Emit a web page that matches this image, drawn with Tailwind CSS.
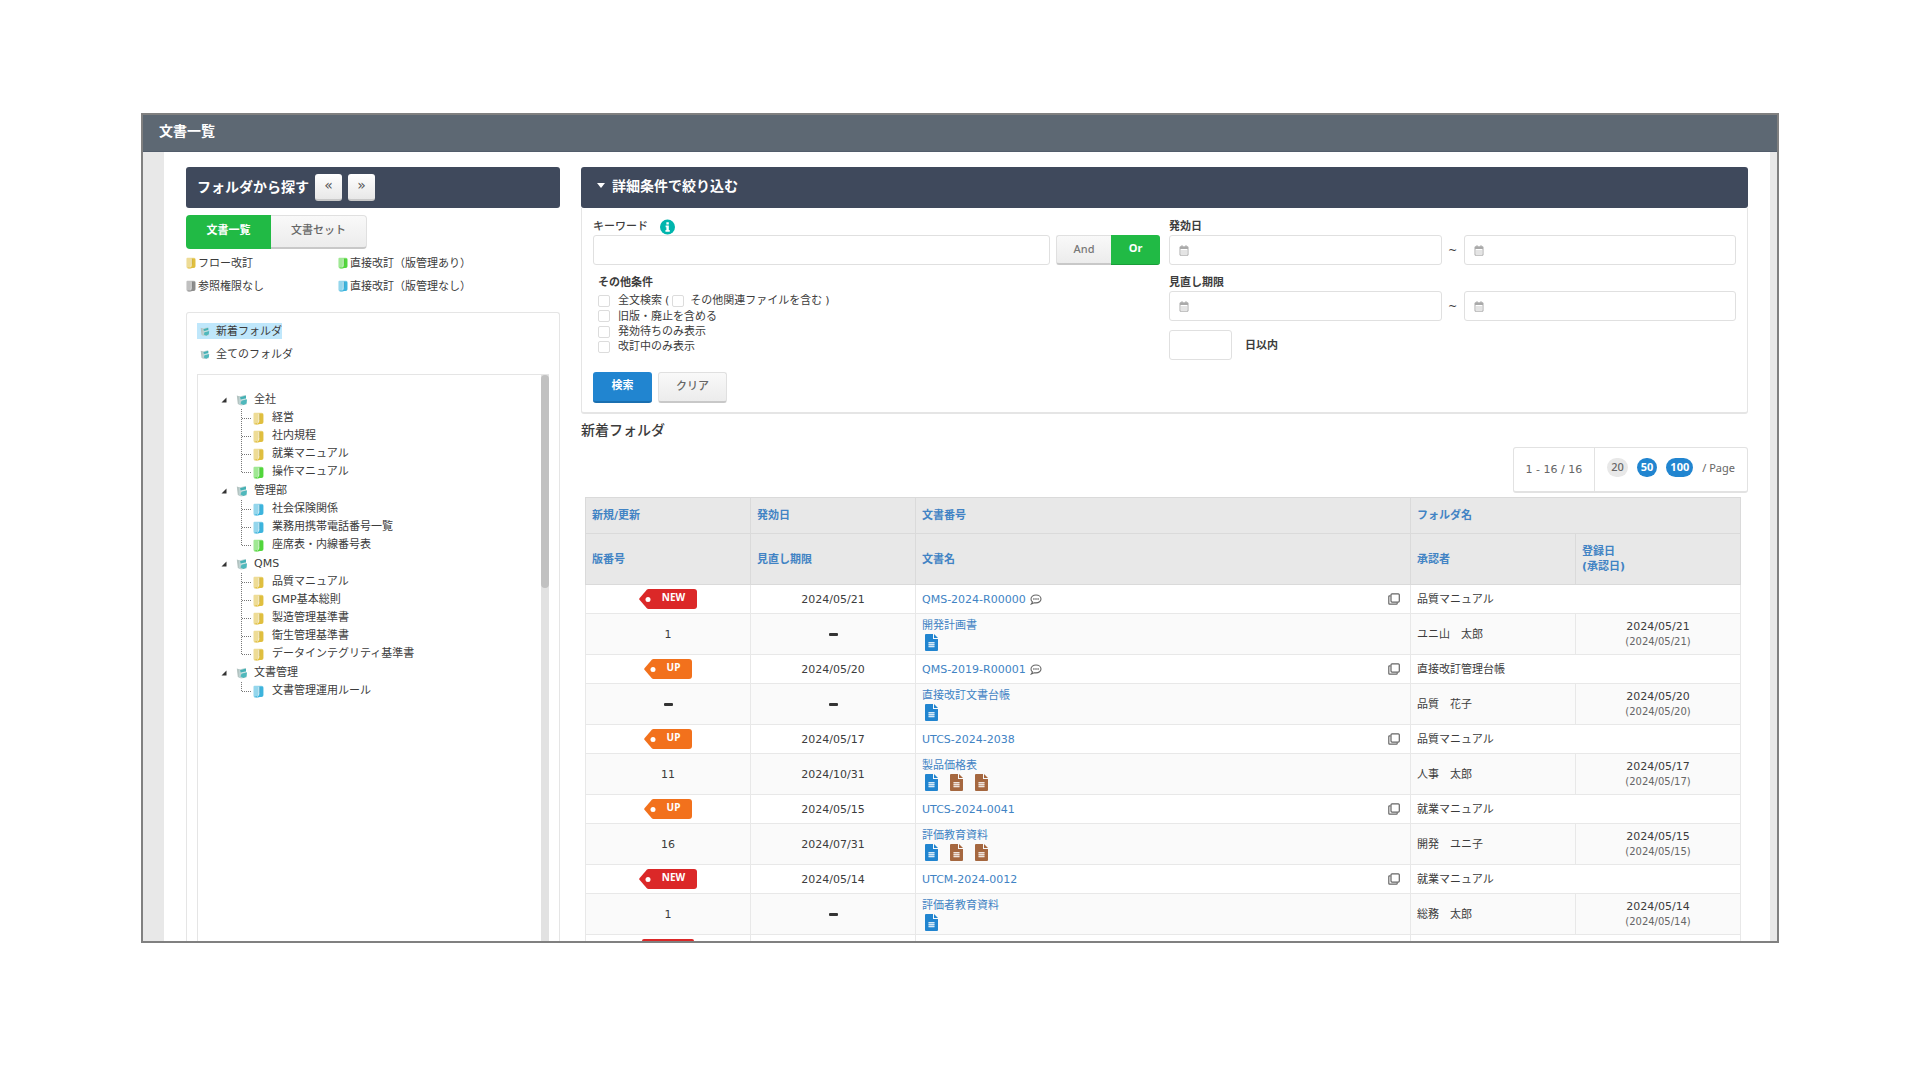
<!DOCTYPE html>
<html lang="ja">
<head>
    <meta charset="UTF-8">
    <meta name="viewport" content="width=device-width, initial-scale=1.0">
    <title>文書一覧</title>
    <script src="https://cdn.jsdelivr.net/npm/@tailwindcss/browser@4"></script>
</head>
<body class="bg-white">
    <!-- icons -->
    <svg class="hidden">
        <symbol id="folder" viewBox="0 0 11 13">
            <path d="M1.500.8h7q2 0 2 1.500v8q0 1.200-1.500 1.400L3 12.600q-2.500 0-2.500-1.600V1.800q0-1 1-1z" fill="currentColor" opacity=".55"/>
            <path d="M6.500 1.500h2.500q1.200 0 1.200 1.200v7.500q0 1-1.200 1.200L4.500 12.200q2-1 2-4z" fill="currentColor"/>
            <path d="M1 12 4.500 10.800 10 10.200q0 1.200-1.300 1.500L3.500 12.600z" fill="currentColor"/>
            <path d="M5.800 2v6q0 2.500-1.800 4" fill="none" stroke="#fff" stroke-opacity=".6" stroke-width=".8"/>
            <path d="M6.600 1.800v6.400" stroke="#000" stroke-opacity=".15" stroke-width=".7"/>
        </symbol>
        <symbol id="cabinet" viewBox="0 0 12 12">
            <path d="M.8 1.500 4 2.500V11L1.800 10z" fill="#b4c4c2"/>
            <path d="M3 2.500 9.500 1l1 9.500L5 11.500l-2-1z" fill="#bfd3d2"/>
            <path d="M4 3.200 10 1.500v3.100L5 6z" fill="#45b1b5"/>
            <path d="M5.500 6.800 11 5.300 10.600 9.400 7.500 11 4.500 9.600z" fill="#4fb8bc"/>
            <path d="M4.800 6 9.500 4.900" stroke="#e4f4f4" stroke-width=".7"/>
        </symbol>
        <symbol id="tee" viewBox="0 0 10 18">
            <path d="M.5 0V18M1 9.500H10" fill="none" stroke="#777" stroke-dasharray="1 1"/>
        </symbol>
        <symbol id="elbow" viewBox="0 0 10 18">
            <path d="M.5 0V10M1 9.500H10" fill="none" stroke="#777" stroke-dasharray="1 1"/>
        </symbol>
        <symbol id="open" viewBox="0 0 6 6"><path d="M5.500.5v5H.5z" fill="#333"/></symbol>
        <symbol id="calendar" viewBox="0 0 10 11">
            <path d="M1 1.800h8v8.400H1z" fill="none" stroke="#aaa" stroke-width="1"/>
            <path d="M1 2h8v2H1z" fill="#aaa"/>
            <path d="M3 .3v2M7 .3v2" stroke="#aaa" stroke-width="1.200"/>
            <path d="M2 6h6M2 8h6" stroke="#bbb" stroke-width=".8"/>
        </symbol>
        <symbol id="file" viewBox="0 0 13 17">
            <path d="M1 0h7v5h5v11q0 1-1 1H1q-1 0-1-1V1q0-1 1-1z" fill="currentColor"/>
            <path d="M9 0 13 4H9z" fill="currentColor"/>
            <path d="M3.500 8h6v1.200h-6zM3.500 10h6v1.200h-6zM3.500 12h6v1.200h-6z" fill="#fff" opacity=".75"/>
            <path d="M3.500 8h6v5.200h-6z" fill="#fff" opacity=".3"/>
        </symbol>
        <symbol id="copy" viewBox="0 0 12 12">
            <rect x="3" y=".8" width="8.300" height="8.300" rx="1" fill="none" stroke="#666" stroke-width="1.200"/>
            <path d="M2.500 2.800H1.600q-.8 0-.8.800v6.800q0 .8.800.8h6.800q.8 0 .8-.8v-.9" fill="none" stroke="#666" stroke-width="1.200"/>
        </symbol>
        <symbol id="comment" viewBox="0 0 12 11">
            <path d="M6 1C3.200 1 1 2.600 1 4.900c0 1.300.6 2.300 1.500 3L1.300 10l2.900-1.300c.6.100 1.200.2 1.800.2 2.800 0 5-1.700 5-4S8.800 1 6 1z" fill="none" stroke="#666" stroke-width="1.100"/>
            <path d="M3.300 5h1.200M5.400 5h1.200M7.500 5h1.200" stroke="#555" stroke-width="1.300"/>
        </symbol>
        <symbol id="minus" viewBox="0 0 9 3"><rect width="9" height="3" rx="1" fill="#333"/></symbol>
        <symbol id="tip" viewBox="0 0 12 20">
            <path d="M12 0H9.500Q8.500 0 7.800.8L.5 9.200q-.6.800 0 1.600l7.300 8.400q.7.800 1.700.8H12z" fill="currentColor"/>
            <circle cx="9" cy="10.500" r="2.500" fill="#fff"/>
        </symbol>
    </svg>

    <div class="h-screen overflow-hidden pt-[113px] pb-[137px] px-[141px] text-[11px] leading-[15px] text-[#3c3c3c] font-['DejaVu_Sans','Noto_Sans_CJK_JP',sans-serif]">
        <div class="h-full flex flex-col overflow-hidden border-2 border-[#808080]">
            <header class="h-[37px] shrink-0 flex items-center px-4 pb-1 bg-[#5d6873] border-b border-[#525d6b]">
                <h1 class="text-[14px] leading-5 font-bold text-white">文書一覧</h1>
            </header>
            <div class="flex-1 min-h-0 flex pl-[21px] pr-[7px] bg-[#e8e8e8]">
                <div class="flex-1 min-w-0 flex gap-[21px] pl-[22px] pr-[22px] pt-[15px] bg-white">

                    <!-- folder pane -->
                    <aside class="w-[374px] shrink-0 flex flex-col">
                        <div class="h-[41px] shrink-0 flex items-center gap-[6px] px-[11px] rounded-[3px] bg-[#3f495c]">
                            <h2 class="pb-[2px] text-[14px] leading-5 font-bold text-white">フォルダから探す</h2>
                            <button class="w-[27px] h-[27px] pb-[3px] rounded-[3px] border-b-2 border-[#c8c8c8] bg-linear-to-b from-white to-[#e8e8e8] text-[14px] leading-5 text-[#555]">«</button>
                            <button class="w-[27px] h-[27px] pb-[3px] rounded-[3px] border-b-2 border-[#c8c8c8] bg-linear-to-b from-white to-[#e8e8e8] text-[14px] leading-5 text-[#555]">»</button>
                        </div>
                        <div class="flex shrink-0 mt-[7px] h-[34px]">
                            <button class="w-[85px] pb-1 rounded-l-[4px] bg-[#21ba45] text-white font-bold">文書一覧</button>
                            <button class="w-[96px] pb-[2px] rounded-r-[4px] border border-l-0 border-b-2 border-[#e0e0e0] border-b-[#c8c8c8] bg-linear-to-b from-[#f9f9f9] to-[#ececec] text-[#666] font-medium">文書セット</button>
                        </div>
                        <ul class="grid grid-cols-[152px_1fr] gap-y-2 mt-[7px]">
                            <li class="flex items-center gap-[2px]"><svg class="w-[10px] h-3 mb-[2px] text-[#e0bf3f]"><use href="#folder"/></svg>フロー改訂</li>
                            <li class="flex items-center gap-[2px]"><svg class="w-[10px] h-3 mb-[2px] text-[#52d63c]"><use href="#folder"/></svg>直接改訂（版管理あり）</li>
                            <li class="flex items-center gap-[2px]"><svg class="w-[10px] h-3 mb-[2px] text-[#8c8c8c]"><use href="#folder"/></svg>参照権限なし</li>
                            <li class="flex items-center gap-[2px]"><svg class="w-[10px] h-3 mb-[2px] text-[#3db4dd]"><use href="#folder"/></svg>直接改訂（版管理なし）</li>
                        </ul>
                        <div class="flex-1 min-h-0 flex flex-col mt-[18px] px-[10px] pt-[10px] border border-b-0 border-[#e5e5e5] rounded-t-[3px]">
                            <a href="#" class="self-start flex items-center h-4 pl-[3px] gap-[6px] bg-[#bfe7fb]"><svg class="w-[10px] h-[11px]"><use href="#cabinet"/></svg>新着フォルダ</a>
                            <a href="#" class="self-start flex items-center h-4 mt-[7px] pl-[3px] gap-[6px]"><svg class="w-[10px] h-[11px]"><use href="#cabinet"/></svg>全てのフォルダ</a>
                            <div class="flex-1 min-h-0 flex mt-3 border border-b-0 border-r-0 border-[#e5e5e5]">
                                <ul class="flex-1 min-w-0 overflow-hidden pt-[15px] pl-[23px] leading-[18px]">
                                    <li>
                                        <div class="flex items-center h-[19px]"><svg class="w-[6px] h-[6px] mr-[9px]"><use href="#open"/></svg><svg class="w-3 h-3 mr-[6px]"><use href="#cabinet"/></svg>全社</div>
                                        <ul class="pl-5">
                                            <li class="flex items-center"><svg class="w-[10px] h-[18px] mr-[2px]"><use href="#tee"/></svg><svg class="w-[11px] h-[13px] mr-2 text-[#e0bf3f]"><use href="#folder"/></svg>経営</li>
                                            <li class="flex items-center"><svg class="w-[10px] h-[18px] mr-[2px]"><use href="#tee"/></svg><svg class="w-[11px] h-[13px] mr-2 text-[#e0bf3f]"><use href="#folder"/></svg>社内規程</li>
                                            <li class="flex items-center"><svg class="w-[10px] h-[18px] mr-[2px]"><use href="#tee"/></svg><svg class="w-[11px] h-[13px] mr-2 text-[#e0bf3f]"><use href="#folder"/></svg>就業マニュアル</li>
                                            <li class="flex items-center"><svg class="w-[10px] h-[18px] mr-[2px]"><use href="#elbow"/></svg><svg class="w-[11px] h-[13px] mr-2 text-[#52d63c]"><use href="#folder"/></svg>操作マニュアル</li>
                                        </ul>
                                    </li>
                                    <li>
                                        <div class="flex items-center h-[19px]"><svg class="w-[6px] h-[6px] mr-[9px]"><use href="#open"/></svg><svg class="w-3 h-3 mr-[6px]"><use href="#cabinet"/></svg>管理部</div>
                                        <ul class="pl-5">
                                            <li class="flex items-center"><svg class="w-[10px] h-[18px] mr-[2px]"><use href="#tee"/></svg><svg class="w-[11px] h-[13px] mr-2 text-[#3db4dd]"><use href="#folder"/></svg>社会保険関係</li>
                                            <li class="flex items-center"><svg class="w-[10px] h-[18px] mr-[2px]"><use href="#tee"/></svg><svg class="w-[11px] h-[13px] mr-2 text-[#3db4dd]"><use href="#folder"/></svg>業務用携帯電話番号一覧</li>
                                            <li class="flex items-center"><svg class="w-[10px] h-[18px] mr-[2px]"><use href="#elbow"/></svg><svg class="w-[11px] h-[13px] mr-2 text-[#52d63c]"><use href="#folder"/></svg>座席表・内線番号表</li>
                                        </ul>
                                    </li>
                                    <li>
                                        <div class="flex items-center h-[19px]"><svg class="w-[6px] h-[6px] mr-[9px]"><use href="#open"/></svg><svg class="w-3 h-3 mr-[6px]"><use href="#cabinet"/></svg>QMS</div>
                                        <ul class="pl-5">
                                            <li class="flex items-center"><svg class="w-[10px] h-[18px] mr-[2px]"><use href="#tee"/></svg><svg class="w-[11px] h-[13px] mr-2 text-[#e0bf3f]"><use href="#folder"/></svg>品質マニュアル</li>
                                            <li class="flex items-center"><svg class="w-[10px] h-[18px] mr-[2px]"><use href="#tee"/></svg><svg class="w-[11px] h-[13px] mr-2 text-[#e0bf3f]"><use href="#folder"/></svg>GMP基本総則</li>
                                            <li class="flex items-center"><svg class="w-[10px] h-[18px] mr-[2px]"><use href="#tee"/></svg><svg class="w-[11px] h-[13px] mr-2 text-[#e0bf3f]"><use href="#folder"/></svg>製造管理基準書</li>
                                            <li class="flex items-center"><svg class="w-[10px] h-[18px] mr-[2px]"><use href="#tee"/></svg><svg class="w-[11px] h-[13px] mr-2 text-[#e0bf3f]"><use href="#folder"/></svg>衛生管理基準書</li>
                                            <li class="flex items-center"><svg class="w-[10px] h-[18px] mr-[2px]"><use href="#elbow"/></svg><svg class="w-[11px] h-[13px] mr-2 text-[#e0bf3f]"><use href="#folder"/></svg>データインテグリティ基準書</li>
                                        </ul>
                                    </li>
                                    <li>
                                        <div class="flex items-center h-[19px]"><svg class="w-[6px] h-[6px] mr-[9px]"><use href="#open"/></svg><svg class="w-3 h-3 mr-[6px]"><use href="#cabinet"/></svg>文書管理</div>
                                        <ul class="pl-5">
                                            <li class="flex items-center"><svg class="w-[10px] h-[18px] mr-[2px]"><use href="#elbow"/></svg><svg class="w-[11px] h-[13px] mr-2 text-[#3db4dd]"><use href="#folder"/></svg>文書管理運用ルール</li>
                                        </ul>
                                    </li>
                                </ul>
                                <div class="w-2 bg-[#e2e2e2]"><div class="h-[213px] rounded-[4px] bg-[#c1c1c1]"></div></div>
                            </div>
                        </div>
                    </aside>

                    <main class="flex-1 min-w-0">
                        <!-- search conditions -->
                        <h2 class="h-[41px] flex items-center gap-[7px] px-4 pb-1 rounded-[3px] bg-[#3f495c] text-[14px] leading-5 font-bold text-white"><svg class="w-2 h-[5px]" viewBox="0 0 8 5"><path d="M0 0h8L4 5z" fill="#fff"/></svg>詳細条件で絞り込む</h2>
                        <form class="grid grid-cols-2 gap-[9px] h-[206px] px-[11px] pt-[10px] border border-t-0 border-b-2 border-[#e5e5e5] rounded-b-[3px]">
                            <div>
                                <div class="flex items-center h-[17px] gap-3">
                                    <label for="keyword" class="font-medium">キーワード</label>
                                    <svg class="w-[15px] h-4" viewBox="0 0 16 16"><circle cx="8" cy="8" r="8" fill="#00b5ad"/><path d="M6.800 3h2.600v2.300H6.800zM6 6.500h3.400v4.700h1V13H5.800v-1.800h1V8.200H6z" fill="#fff"/></svg>
                                </div>
                                <div class="flex h-[30px]">
                                    <input id="keyword" type="text" class="flex-1 min-w-0 mr-[6px] border border-[#e0e0e0] rounded-[3px]">
                                    <button type="button" class="w-[55px] pb-[2px] rounded-l-[3px] border border-r-0 border-b-2 border-[#e0e0e0] border-b-[#c8c8c8] bg-linear-to-b from-[#f9f9f9] to-[#ececec] font-medium font-['Noto_Sans'] text-[#777]">And</button>
                                    <button type="button" class="w-[49px] pb-1 rounded-r-[3px] border-b border-[#1a9c39] bg-[#21ba45] font-bold font-['Noto_Sans'] text-white">Or</button>
                                </div>
                                <fieldset class="pl-[5px] mt-[9px]">
                                    <legend class="h-[19px] pt-px font-bold">その他条件</legend>
                                    <div class="flex items-center h-[15px]">
                                        <input id="c1" type="checkbox" class="appearance-none w-3 h-3 mr-2 border border-[#dcdcdc] rounded-[2px]"><label for="c1">全文検索</label>
                                        <span class="mx-[3px]">(</span>
                                        <input id="c2" type="checkbox" class="appearance-none w-3 h-3 mr-[6px] border border-[#dcdcdc] rounded-[2px]"><label for="c2">その他関連ファイルを含む</label>
                                        <span class="ml-[3px]">)</span>
                                    </div>
                                    <div class="flex items-center h-4"><input id="c3" type="checkbox" class="appearance-none w-3 h-3 mr-2 border border-[#dcdcdc] rounded-[2px]"><label for="c3">旧版・廃止を含める</label></div>
                                    <div class="flex items-center h-[15px]"><input id="c4" type="checkbox" class="appearance-none w-3 h-3 mr-2 border border-[#dcdcdc] rounded-[2px]"><label for="c4">発効待ちのみ表示</label></div>
                                    <div class="flex items-center h-[15px]"><input id="c5" type="checkbox" class="appearance-none w-3 h-3 mr-2 border border-[#dcdcdc] rounded-[2px]"><label for="c5">改訂中のみ表示</label></div>
                                </fieldset>
                                <div class="flex gap-[6px] h-[31px] mt-[18px]">
                                    <button type="button" class="w-[59px] pb-[2px] rounded-[3px] border-b-2 border-[#1a6fb0] bg-[#2185d0] font-bold text-white">検索</button>
                                    <button type="button" class="w-[69px] pb-[2px] rounded-[3px] border border-b-2 border-[#e0e0e0] border-b-[#c8c8c8] bg-linear-to-b from-[#f9f9f9] to-[#ececec] font-medium text-[#666]">クリア</button>
                                </div>
                            </div>
                            <div>
                                <label for="d1" class="block h-[17px] pt-px font-bold">発効日</label>
                                <div class="flex items-center h-[30px]">
                                    <div class="flex-1 flex items-center h-full px-[9px] border border-[#e0e0e0] rounded-[3px]"><svg class="w-[10px] h-[11px]"><use href="#calendar"/></svg><input id="d1" type="text" class="flex-1 min-w-0 h-full"></div>
                                    <span class="w-[22px] text-center">~</span>
                                    <div class="flex-1 flex items-center h-full px-[9px] border border-[#e0e0e0] rounded-[3px]"><svg class="w-[10px] h-[11px]"><use href="#calendar"/></svg><input type="text" aria-label="発効日" class="flex-1 min-w-0 h-full"></div>
                                </div>
                                <label for="d2" class="block h-[17px] mt-[9px] pt-px font-bold">見直し期限</label>
                                <div class="flex items-center h-[30px]">
                                    <div class="flex-1 flex items-center h-full px-[9px] border border-[#e0e0e0] rounded-[3px]"><svg class="w-[10px] h-[11px]"><use href="#calendar"/></svg><input id="d2" type="text" class="flex-1 min-w-0 h-full"></div>
                                    <span class="w-[22px] text-center">~</span>
                                    <div class="flex-1 flex items-center h-full px-[9px] border border-[#e0e0e0] rounded-[3px]"><svg class="w-[10px] h-[11px]"><use href="#calendar"/></svg><input type="text" aria-label="見直し期限" class="flex-1 min-w-0 h-full"></div>
                                </div>
                                <div class="flex items-center h-[30px] mt-[9px]">
                                    <input id="days" type="text" class="w-[63px] h-full mr-[13px] border border-[#e0e0e0] rounded-[3px]"><label for="days" class="font-bold">日以内</label>
                                </div>
                            </div>
                        </form>

                        <!-- results -->
                        <h3 class="mt-[6px] text-[14px] leading-5 font-medium">新着フォルダ</h3>
                        <div class="flex justify-end mt-[7px]">
                            <div class="flex h-[46px] border border-b-2 border-[#e2e2e2] rounded-[3px]">
                                <div class="flex items-center px-3 border-r border-[#e2e2e2] text-[#666]">1 - 16 / 16</div>
                                <div class="flex items-center gap-[9px] px-3 pb-1 font-['Noto_Sans'] text-[#666]">
                                    <a href="#" class="px-1 h-[19px] leading-[17px] rounded-full bg-[#e8e8e8] font-medium">20</a>
                                    <a href="#" class="px-1 h-[19px] leading-[17px] rounded-full bg-[#2185d0] text-white font-bold">50</a>
                                    <a href="#" class="px-1 h-[19px] leading-[17px] rounded-full bg-[#2185d0] text-white font-bold">100</a>
                                    <span>/ Page</span>
                                </div>
                            </div>
                        </div>
                        <div class="mt-1 pl-1 pr-[7px]">
                            <table class="w-full table-fixed border-collapse border border-[#e2e2e2]">
                                <colgroup><col class="w-1/7"><col class="w-1/7"><col class="w-3/7"><col class="w-1/7"><col class="w-1/7"></colgroup>
                                <thead class="bg-[#e8e8e8] text-left text-[#4183c4]">
                                    <tr class="h-[36px]">
                                        <th class="px-[6px] border border-[#dadada]">新規/更新</th><th class="px-[6px] border border-[#dadada]">発効日</th><th class="px-[6px] border border-[#dadada]">文書番号</th><th colspan="2" class="px-[6px] border border-[#dadada]">フォルダ名</th>
                                    </tr>
                                    <tr class="h-[51px]">
                                        <th class="px-[6px] border border-[#dadada]">版番号</th><th class="px-[6px] border border-[#dadada]">見直し期限</th><th class="px-[6px] border border-[#dadada]">文書名</th><th class="px-[6px] border border-[#dadada]">承認者</th><th class="px-[6px] border border-[#dadada]">登録日<br>(承認日)</th>
                                    </tr>
                                </thead>
                                <tbody>
                                    <tr class="h-[29px]">
                                        <td class="border border-[#e8e8e8]"><span class="flex justify-center text-[#db2828]"><svg class="w-3 h-5"><use href="#tip"/></svg><b class="h-5 pl-[11px] pr-3 leading-[17px] rounded-r-[3px] bg-[#db2828] text-[10px] text-white font-['Noto_Sans']">NEW</b></span></td>
                                        <td class="border border-[#e8e8e8] text-center">2024/05/21</td>
                                        <td class="px-[6px] border border-[#e8e8e8]"><span class="flex items-center"><a href="#" class="mr-1 text-[#4183c4]">QMS-2024-R00000</a><svg class="w-3 h-[11px]"><use href="#comment"/></svg><svg class="w-3 h-3 ml-auto mr-1"><use href="#copy"/></svg></span></td>
                                        <td colspan="2" class="px-[6px] border border-[#e8e8e8]">品質マニュアル</td>
                                    </tr>
                                    <tr class="h-[41px] bg-[#fafafa]">
                                        <td class="border border-[#e8e8e8] text-center">1</td>
                                        <td class="border border-[#e8e8e8]"><svg class="w-[9px] h-[3px] mx-auto"><use href="#minus"/></svg></td>
                                        <td class="px-[6px] border border-[#e8e8e8]"><a href="#" class="block h-4 text-[#4183c4]">開発計画書</a><span class="flex gap-3 pl-[3px]"><svg class="w-[13px] h-[17px] text-[#2185d0]"><use href="#file"/></svg></span></td>
                                        <td class="px-[6px] border border-[#e8e8e8]">ユニ山　太郎</td>
                                        <td class="border border-[#e8e8e8] text-center">2024/05/21<br><span class="text-[10px] text-[#666]">(2024/05/21)</span></td>
                                    </tr>
                                    <tr class="h-[29px]">
                                        <td class="border border-[#e8e8e8]"><span class="flex justify-center text-[#f2711c]"><svg class="w-3 h-5"><use href="#tip"/></svg><b class="h-5 pl-[11px] pr-3 leading-[17px] rounded-r-[3px] bg-[#f2711c] text-[10px] text-white font-['Noto_Sans']">UP</b></span></td>
                                        <td class="border border-[#e8e8e8] text-center">2024/05/20</td>
                                        <td class="px-[6px] border border-[#e8e8e8]"><span class="flex items-center"><a href="#" class="mr-1 text-[#4183c4]">QMS-2019-R00001</a><svg class="w-3 h-[11px]"><use href="#comment"/></svg><svg class="w-3 h-3 ml-auto mr-1"><use href="#copy"/></svg></span></td>
                                        <td colspan="2" class="px-[6px] border border-[#e8e8e8]">直接改訂管理台帳</td>
                                    </tr>
                                    <tr class="h-[41px] bg-[#fafafa]">
                                        <td class="border border-[#e8e8e8]"><svg class="w-[9px] h-[3px] mx-auto"><use href="#minus"/></svg></td>
                                        <td class="border border-[#e8e8e8]"><svg class="w-[9px] h-[3px] mx-auto"><use href="#minus"/></svg></td>
                                        <td class="px-[6px] border border-[#e8e8e8]"><a href="#" class="block h-4 text-[#4183c4]">直接改訂文書台帳</a><span class="flex gap-3 pl-[3px]"><svg class="w-[13px] h-[17px] text-[#2185d0]"><use href="#file"/></svg></span></td>
                                        <td class="px-[6px] border border-[#e8e8e8]">品質　花子</td>
                                        <td class="border border-[#e8e8e8] text-center">2024/05/20<br><span class="text-[10px] text-[#666]">(2024/05/20)</span></td>
                                    </tr>
                                    <tr class="h-[29px]">
                                        <td class="border border-[#e8e8e8]"><span class="flex justify-center text-[#f2711c]"><svg class="w-3 h-5"><use href="#tip"/></svg><b class="h-5 pl-[11px] pr-3 leading-[17px] rounded-r-[3px] bg-[#f2711c] text-[10px] text-white font-['Noto_Sans']">UP</b></span></td>
                                        <td class="border border-[#e8e8e8] text-center">2024/05/17</td>
                                        <td class="px-[6px] border border-[#e8e8e8]"><span class="flex items-center"><a href="#" class="text-[#4183c4]">UTCS-2024-2038</a><svg class="w-3 h-3 ml-auto mr-1"><use href="#copy"/></svg></span></td>
                                        <td colspan="2" class="px-[6px] border border-[#e8e8e8]">品質マニュアル</td>
                                    </tr>
                                    <tr class="h-[41px] bg-[#fafafa]">
                                        <td class="border border-[#e8e8e8] text-center">11</td>
                                        <td class="border border-[#e8e8e8] text-center">2024/10/31</td>
                                        <td class="px-[6px] border border-[#e8e8e8]"><a href="#" class="block h-4 text-[#4183c4]">製品価格表</a><span class="flex gap-3 pl-[3px]"><svg class="w-[13px] h-[17px] text-[#2185d0]"><use href="#file"/></svg><svg class="w-[13px] h-[17px] text-[#a5673f]"><use href="#file"/></svg><svg class="w-[13px] h-[17px] text-[#a5673f]"><use href="#file"/></svg></span></td>
                                        <td class="px-[6px] border border-[#e8e8e8]">人事　太郎</td>
                                        <td class="border border-[#e8e8e8] text-center">2024/05/17<br><span class="text-[10px] text-[#666]">(2024/05/17)</span></td>
                                    </tr>
                                    <tr class="h-[29px]">
                                        <td class="border border-[#e8e8e8]"><span class="flex justify-center text-[#f2711c]"><svg class="w-3 h-5"><use href="#tip"/></svg><b class="h-5 pl-[11px] pr-3 leading-[17px] rounded-r-[3px] bg-[#f2711c] text-[10px] text-white font-['Noto_Sans']">UP</b></span></td>
                                        <td class="border border-[#e8e8e8] text-center">2024/05/15</td>
                                        <td class="px-[6px] border border-[#e8e8e8]"><span class="flex items-center"><a href="#" class="text-[#4183c4]">UTCS-2024-0041</a><svg class="w-3 h-3 ml-auto mr-1"><use href="#copy"/></svg></span></td>
                                        <td colspan="2" class="px-[6px] border border-[#e8e8e8]">就業マニュアル</td>
                                    </tr>
                                    <tr class="h-[41px] bg-[#fafafa]">
                                        <td class="border border-[#e8e8e8] text-center">16</td>
                                        <td class="border border-[#e8e8e8] text-center">2024/07/31</td>
                                        <td class="px-[6px] border border-[#e8e8e8]"><a href="#" class="block h-4 text-[#4183c4]">評価教育資料</a><span class="flex gap-3 pl-[3px]"><svg class="w-[13px] h-[17px] text-[#2185d0]"><use href="#file"/></svg><svg class="w-[13px] h-[17px] text-[#a5673f]"><use href="#file"/></svg><svg class="w-[13px] h-[17px] text-[#a5673f]"><use href="#file"/></svg></span></td>
                                        <td class="px-[6px] border border-[#e8e8e8]">開発　ユニ子</td>
                                        <td class="border border-[#e8e8e8] text-center">2024/05/15<br><span class="text-[10px] text-[#666]">(2024/05/15)</span></td>
                                    </tr>
                                    <tr class="h-[29px]">
                                        <td class="border border-[#e8e8e8]"><span class="flex justify-center text-[#db2828]"><svg class="w-3 h-5"><use href="#tip"/></svg><b class="h-5 pl-[11px] pr-3 leading-[17px] rounded-r-[3px] bg-[#db2828] text-[10px] text-white font-['Noto_Sans']">NEW</b></span></td>
                                        <td class="border border-[#e8e8e8] text-center">2024/05/14</td>
                                        <td class="px-[6px] border border-[#e8e8e8]"><span class="flex items-center"><a href="#" class="text-[#4183c4]">UTCM-2024-0012</a><svg class="w-3 h-3 ml-auto mr-1"><use href="#copy"/></svg></span></td>
                                        <td colspan="2" class="px-[6px] border border-[#e8e8e8]">就業マニュアル</td>
                                    </tr>
                                    <tr class="h-[41px] bg-[#fafafa]">
                                        <td class="border border-[#e8e8e8] text-center">1</td>
                                        <td class="border border-[#e8e8e8]"><svg class="w-[9px] h-[3px] mx-auto"><use href="#minus"/></svg></td>
                                        <td class="px-[6px] border border-[#e8e8e8]"><a href="#" class="block h-4 text-[#4183c4]">評価者教育資料</a><span class="flex gap-3 pl-[3px]"><svg class="w-[13px] h-[17px] text-[#2185d0]"><use href="#file"/></svg></span></td>
                                        <td class="px-[6px] border border-[#e8e8e8]">総務　太郎</td>
                                        <td class="border border-[#e8e8e8] text-center">2024/05/14<br><span class="text-[10px] text-[#666]">(2024/05/14)</span></td>
                                    </tr>
                                    <tr class="h-[29px]">
                                        <td class="border border-[#e8e8e8]"><span class="flex justify-center"><span class="w-[52px] h-5 rounded-[2px] bg-[#db2828]"></span></span></td>
                                        <td class="border border-[#e8e8e8]"></td>
                                        <td class="border border-[#e8e8e8]"></td>
                                        <td colspan="2" class="border border-[#e8e8e8]"></td>
                                    </tr>
                                </tbody>
                            </table>
                        </div>
                    </main>
                </div>
            </div>
        </div>
    </div>
</body>
</html>
